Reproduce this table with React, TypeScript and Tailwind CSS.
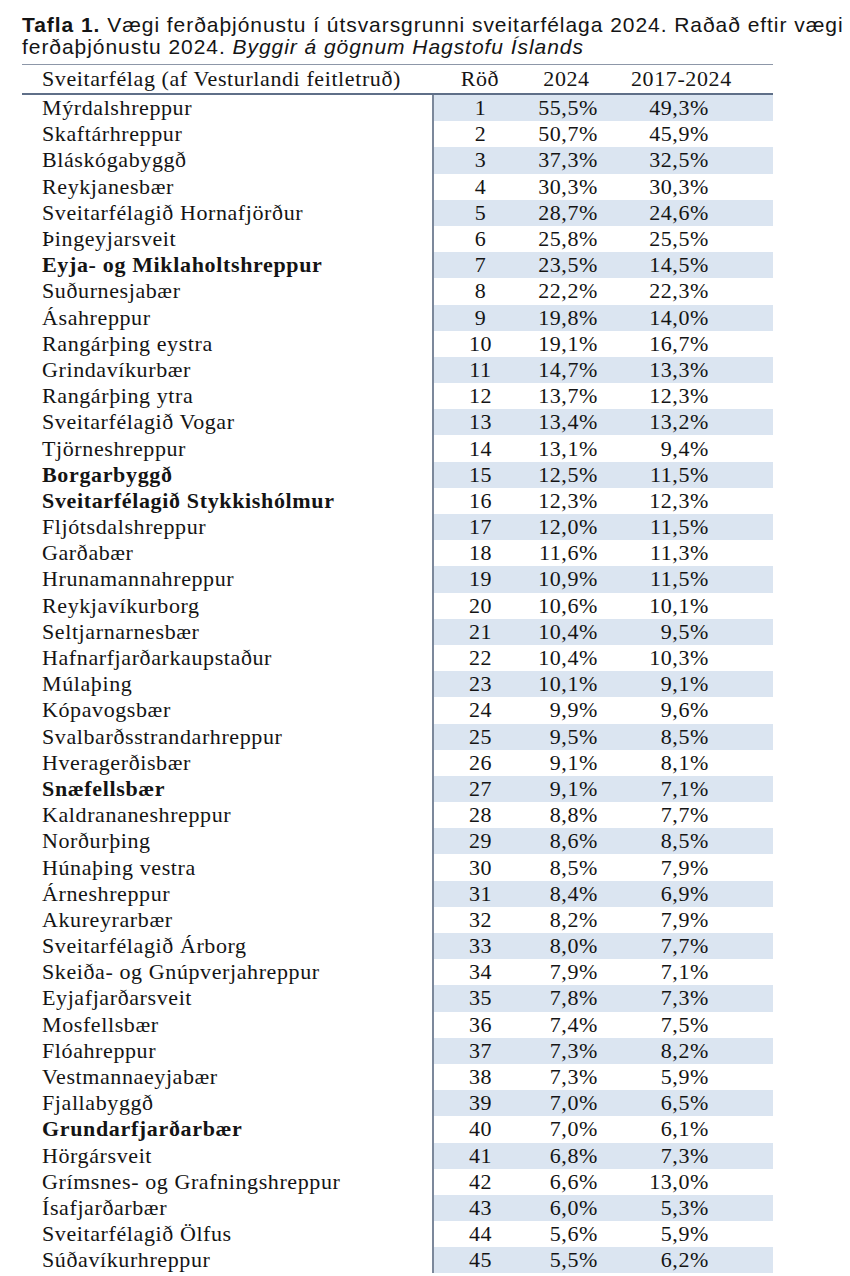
import type { ReactNode } from 'react'

type Row = [string, string, string, boolean?]

const rows: Row[] = [
  ['Mýrdalshreppur', '55,5%', '49,3%'],
  ['Skaftárhreppur', '50,7%', '45,9%'],
  ['Bláskógabyggð', '37,3%', '32,5%'],
  ['Reykjanesbær', '30,3%', '30,3%'],
  ['Sveitarfélagið Hornafjörður', '28,7%', '24,6%'],
  ['Þingeyjarsveit', '25,8%', '25,5%'],
  ['Eyja- og Miklaholtshreppur', '23,5%', '14,5%', true],
  ['Suðurnesjabær', '22,2%', '22,3%'],
  ['Ásahreppur', '19,8%', '14,0%'],
  ['Rangárþing eystra', '19,1%', '16,7%'],
  ['Grindavíkurbær', '14,7%', '13,3%'],
  ['Rangárþing ytra', '13,7%', '12,3%'],
  ['Sveitarfélagið Vogar', '13,4%', '13,2%'],
  ['Tjörneshreppur', '13,1%', '9,4%'],
  ['Borgarbyggð', '12,5%', '11,5%', true],
  ['Sveitarfélagið Stykkishólmur', '12,3%', '12,3%', true],
  ['Fljótsdalshreppur', '12,0%', '11,5%'],
  ['Garðabær', '11,6%', '11,3%'],
  ['Hrunamannahreppur', '10,9%', '11,5%'],
  ['Reykjavíkurborg', '10,6%', '10,1%'],
  ['Seltjarnarnesbær', '10,4%', '9,5%'],
  ['Hafnarfjarðarkaupstaður', '10,4%', '10,3%'],
  ['Múlaþing', '10,1%', '9,1%'],
  ['Kópavogsbær', '9,9%', '9,6%'],
  ['Svalbarðsstrandarhreppur', '9,5%', '8,5%'],
  ['Hveragerðisbær', '9,1%', '8,1%'],
  ['Snæfellsbær', '9,1%', '7,1%', true],
  ['Kaldrananeshreppur', '8,8%', '7,7%'],
  ['Norðurþing', '8,6%', '8,5%'],
  ['Húnaþing vestra', '8,5%', '7,9%'],
  ['Árneshreppur', '8,4%', '6,9%'],
  ['Akureyrarbær', '8,2%', '7,9%'],
  ['Sveitarfélagið Árborg', '8,0%', '7,7%'],
  ['Skeiða- og Gnúpverjahreppur', '7,9%', '7,1%'],
  ['Eyjafjarðarsveit', '7,8%', '7,3%'],
  ['Mosfellsbær', '7,4%', '7,5%'],
  ['Flóahreppur', '7,3%', '8,2%'],
  ['Vestmannaeyjabær', '7,3%', '5,9%'],
  ['Fjallabyggð', '7,0%', '6,5%'],
  ['Grundarfjarðarbær', '7,0%', '6,1%', true],
  ['Hörgársveit', '6,8%', '7,3%'],
  ['Grímsnes- og Grafningshreppur', '6,6%', '13,0%'],
  ['Ísafjarðarbær', '6,0%', '5,3%'],
  ['Sveitarfélagið Ölfus', '5,6%', '5,9%'],
  ['Súðavíkurhreppur', '5,5%', '6,2%'],
]

const cols = 'grid grid-cols-[410px_95px_93px_153px]'

function Cell({ className, children }: { className?: string; children: ReactNode }) {
  return <div className={`flex items-center ${className ?? ''}`}>{children}</div>
}

export default function App() {
  return (
    <div className="h-[1276px] w-[850px] overflow-hidden bg-white text-[#141414]">
      <div className="pl-[22px] pt-[14px] font-['Liberation_Sans',Arial,sans-serif] text-[21px] leading-[22px] tracking-[0.95px] whitespace-nowrap">
        <p>
          <b>Tafla 1.</b> Vægi ferðaþjónustu í útsvarsgrunni sveitarfélaga 2024. Raðað eftir vægi
        </p>
        <p>
          ferðaþjónustu 2024. <i>Byggir á gögnum Hagstofu Íslands</i>
        </p>
      </div>

      <div className="ml-[22px] mt-[6px] w-[751px] font-['Liberation_Serif','Times_New_Roman',serif] text-[22px] leading-[26px] tracking-[0.6px]">
        <div className={`${cols} h-[31px] border-t border-[#8d97a8] border-b-2 border-b-[#5f6f88]`}>
          <Cell className="pl-[20px]">Sveitarfélag (af Vesturlandi feitletruð)</Cell>
          <Cell className="justify-center pl-[1px]">Röð</Cell>
          <Cell className="justify-center pr-[14px]">2024</Cell>
          <Cell className="pl-[11px]">2017-2024</Cell>
        </div>

        <div className={`${cols} auto-rows-[26.2px]`}>
          {rows.map(([name, a, b, bold], i) => {
            const shade = i % 2 === 0 ? 'bg-[#dbe5f1]' : 'bg-white'
            return (
              <div key={name} className="contents">
                <Cell className={`pl-[20px] whitespace-nowrap ${bold ? 'font-bold tracking-[0.65px]' : ''}`}>{name}</Cell>
                <Cell className={`${shade} justify-center border-l-2 border-[#7c889b]`}>{i + 1}</Cell>
                <Cell className={`${shade} justify-end pr-[22px]`}>{a}</Cell>
                <Cell className={`${shade} justify-end pr-[64px]`}>{b}</Cell>
              </div>
            )
          })}
        </div>
      </div>
    </div>
  )
}
